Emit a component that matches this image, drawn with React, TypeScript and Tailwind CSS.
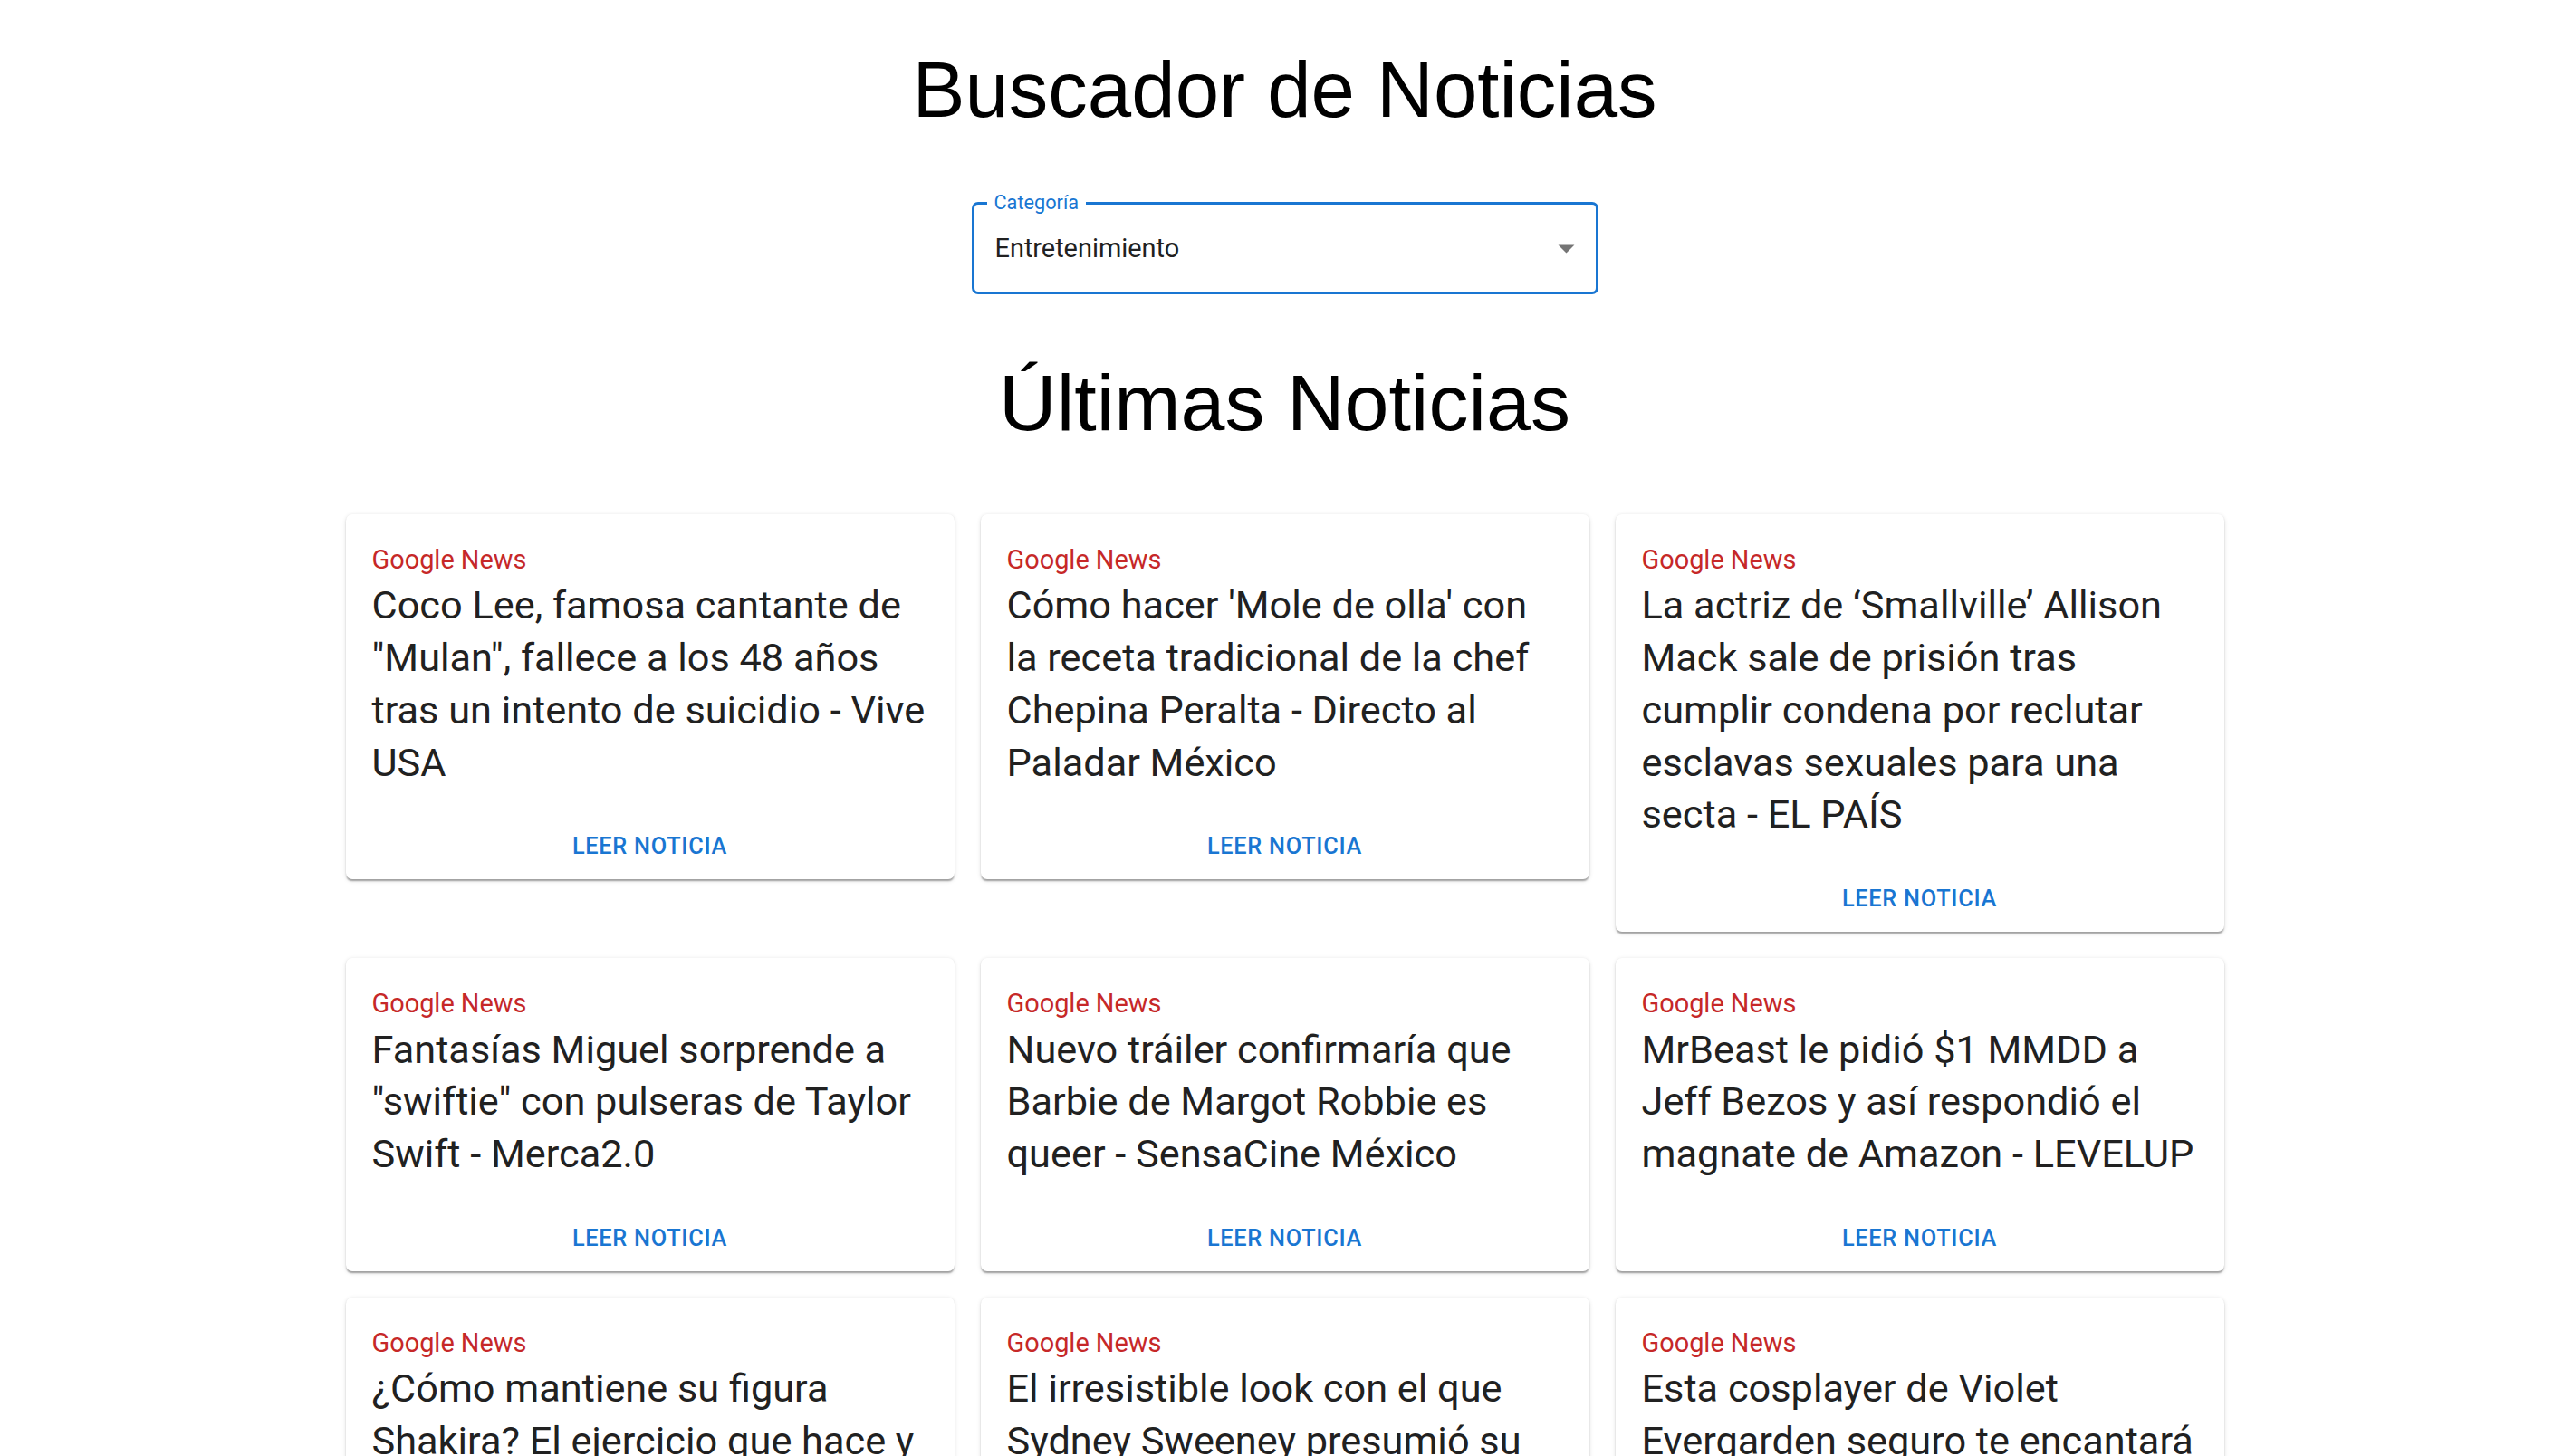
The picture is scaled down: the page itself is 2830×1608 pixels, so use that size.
import { useState } from "react";

type Noticia = {
  fuente: string;
  titulo: string;
};

const noticias: Noticia[] = [
  {
    fuente: "Google News",
    titulo: 'Coco Lee, famosa cantante de "Mulan", fallece a los 48 años tras un intento de suicidio - Vive USA',
  },
  {
    fuente: "Google News",
    titulo: "Cómo hacer 'Mole de olla' con la receta tradicional de la chef Chepina Peralta - Directo al Paladar México",
  },
  {
    fuente: "Google News",
    titulo: "La actriz de ‘Smallville’ Allison Mack sale de prisión tras cumplir condena por reclutar esclavas sexuales para una secta - EL PAÍS",
  },
  {
    fuente: "Google News",
    titulo: 'Fantasías Miguel sorprende a "swiftie" con pulseras de Taylor Swift - Merca2.0',
  },
  {
    fuente: "Google News",
    titulo: "Nuevo tráiler confirmaría que Barbie de Margot Robbie es queer - SensaCine México",
  },
  {
    fuente: "Google News",
    titulo: "MrBeast le pidió $1 MMDD a Jeff Bezos y así respondió el magnate de Amazon - LEVELUP",
  },
  {
    fuente: "Google News",
    titulo: "¿Cómo mantiene su figura Shakira? El ejercicio que hace y lo que come - Infobae",
  },
  {
    fuente: "Google News",
    titulo: "El irresistible look con el que Sydney Sweeney presumió su figura - Glamour",
  },
  {
    fuente: "Google News",
    titulo: "Esta cosplayer de Violet Evergarden seguro te encantará - Atomix",
  },
];

function Selector({ valor }: { valor: string }) {
  return (
    <div className="relative mx-auto mt-[74px] flex h-[102px] w-[692px] items-center rounded-[7px] border-[3px] border-[#1976d2] pl-[23px]">
      <span className="absolute top-[-13px] left-[14px] bg-white px-[8px] text-[21.7px] leading-none text-[#1976d2]">
        Categoría
      </span>
      <span className="text-[28.9px] leading-none text-[#212121]">{valor}</span>
      <svg
        viewBox="0 0 24 24"
        className="absolute top-1/2 right-[11px] h-[43px] w-[43px] -translate-y-1/2 fill-[#757575]"
      >
        <path d="M7 10l5 5 5-5z" />
      </svg>
    </div>
  );
}

function Tarjeta({ n }: { n: Noticia }) {
  return (
    <div className="rounded-[7px] bg-white shadow-[0_3.6px_1.8px_-1.8px_rgba(0,0,0,0.2),0_1.8px_1.8px_0_rgba(0,0,0,0.14),0_1.8px_5.4px_0_rgba(0,0,0,0.12)]">
      <div className="px-[29px] pt-[29px]">
        <p className="text-[28.9px] leading-[43.3px] text-[#c62828]">{n.fuente}</p>
        <h5 className="text-[43.3px] leading-[57.8px] text-[#212121]">{n.titulo}</h5>
      </div>
      <div className="flex justify-center pt-[45px] pb-[18px]">
        <a
          href="#"
          className="text-[25.3px] leading-[37px] font-medium tracking-[0.72px] text-[#1976d2] uppercase"
        >
          Leer Noticia
        </a>
      </div>
    </div>
  );
}

export default function App() {
  const [categoria] = useState("Entretenimiento");

  return (
    <div className="min-h-screen bg-white pl-[7px] font-['Roboto',sans-serif]">
      <h1 className="pt-[49px] text-center font-['Liberation_Sans',Arial,sans-serif] text-[87px] leading-[100px] text-black">
        Buscador de Noticias
      </h1>

      <Selector valor={categoria} />

      <h2 className="mt-[70px] text-center font-['Liberation_Sans',Arial,sans-serif] text-[88px] leading-[100px] text-black">
        Últimas Noticias
      </h2>

      <div className="mx-auto mt-[73px] grid w-[2074px] grid-cols-3 items-start gap-[29px] pb-[60px]">
        {noticias.map((n, i) => (
          <Tarjeta key={i} n={n} />
        ))}
      </div>
    </div>
  );
}
